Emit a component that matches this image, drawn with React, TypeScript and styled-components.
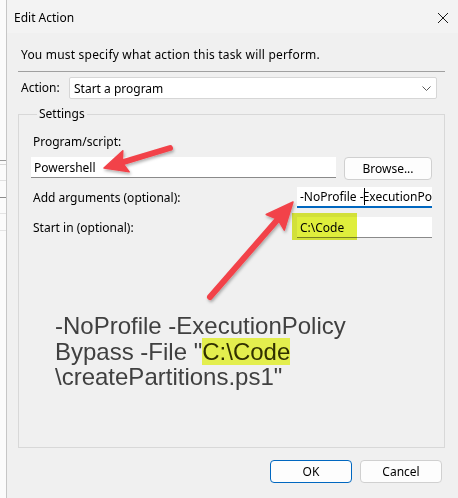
import React from 'react';
import styled, { createGlobalStyle } from 'styled-components';

const GlobalStyle = createGlobalStyle`
  html, body {
    margin: 0;
    padding: 0;
    background: #ffffff;
  }
  * {
    box-sizing: border-box;
  }
`;

const uiFont = `'Noto Sans', 'Open Sans', sans-serif`;

const Page = styled.div`
  position: relative;
  display: flex;
  width: 458px;
  height: 498px;
  overflow: hidden;
  font-family: ${uiFont};
  font-size: 12px;
  color: #000;
`;

// the window lying behind the dialog, only a sliver of it shows
const BackWindow = styled.div`
  width: 6px;
  flex-shrink: 0;
  background:
    linear-gradient(#9a9a9a, #9a9a9a) 0 160px / 100% 1px no-repeat,
    linear-gradient(#d8d8d8, #d8d8d8) 0 164px / 100% 1px no-repeat,
    linear-gradient(#e0e0e0, #e0e0e0) 0 180px / 100% 1px no-repeat,
    linear-gradient(#8c8c8c, #8c8c8c) 0 197px / 100% 1px no-repeat,
    linear-gradient(#e4e4e4, #e4e4e4) 0 213px / 100% 1px no-repeat,
    linear-gradient(#e4e4e4, #e4e4e4) 0 230px / 100% 1px no-repeat,
    #fbfbfb;
`;

const Dialog = styled.div`
  flex: 1;
  display: flex;
  flex-direction: column;
  background: #f0f0f0;
  border-left: 1px solid #c6c6c6;
`;

const TitleBar = styled.div`
  height: 33px;
  flex-shrink: 0;
  display: flex;
  align-items: center;
  justify-content: space-between;
  padding: 2px 9px 0 7px;
  background: #f3f3f3;
`;

const Title = styled.span`
  line-height: 16px;
`;

const Body = styled.div`
  display: flex;
  flex-direction: column;
  padding: 0 13px 0 11px;
`;

const Intro = styled.div`
  margin-top: 14px;
  padding-left: 3px;
  line-height: 16px;
  letter-spacing: 0.2px;
`;

const Separator = styled.div`
  margin-top: 8px;
  height: 1px;
  background: #a0a0a0;
`;

const Row = styled.div<{ $top: number; $align?: string }>`
  display: flex;
  align-items: ${p => p.$align ?? 'center'};
  margin-top: ${p => p.$top}px;
`;

const Label = styled.span<{ $width?: number; $pad?: number }>`
  width: ${p => (p.$width ? `${p.$width}px` : 'auto')};
  flex: ${p => (p.$width ? 'none' : '1')};
  padding-left: ${p => p.$pad ?? 2}px;
  line-height: 16px;
  white-space: nowrap;
`;

const Combo = styled.div`
  flex: 1;
  height: 22px;
  margin-right: 8px;
  display: flex;
  align-items: center;
  justify-content: space-between;
  padding: 0 5px 0 4px;
  background: #ffffff;
  border: 1px solid #d6d6d6;
  border-radius: 2px;
`;

const GroupBox = styled.fieldset`
  margin: 7px 0 0;
  height: 342px;
  padding: 0 12px;
  border: 1px solid #d8d8d8;
  min-width: 0;
`;

const Legend = styled.legend`
  margin-left: 6px;
  padding: 0 2px;
  line-height: 16px;
`;

const TextBox = styled.div<{ $active?: boolean; $width?: number; $gap?: number }>`
  position: relative;
  height: 21px;
  width: ${p => (p.$width ? `${p.$width}px` : 'auto')};
  flex: ${p => (p.$width ? 'none' : '1')};
  margin-right: ${p => p.$gap ?? 0}px;
  display: flex;
  align-items: center;
  padding-left: 3px;
  background: #ffffff;
  border-bottom: ${p => (p.$active ? '2px solid #0067c0' : '1px solid #8a8a8a')};
  white-space: nowrap;
  overflow: hidden;
`;

const Caret = styled.span`
  display: inline-block;
  width: 1px;
  height: 17px;
  margin-right: -1px;
  background: #000;
`;

// highlighter mark drawn over the start-in box
const Highlight = styled.span`
  position: absolute;
  left: -5px;
  top: -4px;
  width: 65px;
  height: 27px;
  background: #dfee3c;
  mix-blend-mode: multiply;
`;

const HighlightWrap = styled.div`
  position: relative;
  display: flex;
`;

const Button = styled.button<{ $primary?: boolean; $width?: number }>`
  width: ${p => p.$width ?? 82}px;
  height: 23px;
  padding: 0;
  font-family: ${uiFont};
  font-size: 12px;
  color: #000;
  background: #fdfdfd;
  border: 1px solid ${p => (p.$primary ? '#0067c0' : '#d0d0d0')};
  border-radius: 4px;
`;

const Note = styled.div`
  margin: 75px 0 0 24px;
  font-family: 'Liberation Sans', Arial, sans-serif;
  font-size: 24px;
  line-height: 25.5px;
  color: #404040;
`;

const Mark = styled.span`
  background: #e3ee4e;
  color: #303000;
`;

const ButtonRow = styled.div`
  display: flex;
  justify-content: flex-end;
  gap: 8px;
  margin: 12px 3px 0 0;
`;

const Overlay = styled.svg`
  position: absolute;
  left: 0;
  top: 0;
  pointer-events: none;
`;

function Close() {
  return (
    <svg width="12" height="12" viewBox="0 0 12 12">
      <path d="M1 1 L11 11 M11 1 L1 11" stroke="#1a1a1a" strokeWidth="1" />
    </svg>
  );
}

function Chevron() {
  return (
    <svg width="9" height="5" viewBox="0 0 9 5">
      <path d="M0.5 0.5 L4.5 4.5 L8.5 0.5" stroke="#5a5a5a" fill="none" strokeWidth="1" />
    </svg>
  );
}

function Arrow({ x1, y1, x2, y2, len, half }: { x1: number; y1: number; x2: number; y2: number; len: number; half: number }) {
  const d = Math.hypot(x2 - x1, y2 - y1);
  const ux = (x2 - x1) / d;
  const uy = (y2 - y1) / d;
  const bx = x2 - ux * len;
  const by = y2 - uy * len;
  const nx = uy;
  const ny = -ux;
  const head = `${x2},${y2} ${bx + nx * half},${by + ny * half} ${bx + ux * 4},${by + uy * 4} ${bx - nx * half},${by - ny * half}`;
  return (
    <g filter="url(#shade)">
      <line x1={x1} y1={y1} x2={bx + ux * 3} y2={by + uy * 3} stroke="#f2434a" strokeWidth="6" strokeLinecap="round" />
      <polygon points={head} fill="#f2434a" stroke="#f2434a" strokeWidth="1.5" strokeLinejoin="round" />
    </g>
  );
}

export default function App() {
  return (
    <>
      <GlobalStyle />
      <Page>
        <BackWindow />
        <Dialog>
          <TitleBar>
            <Title>Edit Action</Title>
            <Close />
          </TitleBar>
          <Body>
            <Intro>You must specify what action this task will perform.</Intro>
            <Separator />
            <Row $top={5}>
              <Label $width={51} $pad={3}>Action:</Label>
              <Combo>
                <span>Start a program</span>
                <Chevron />
              </Combo>
            </Row>
            <GroupBox>
              <Legend>Settings</Legend>
              <Row $top={12}>
                <Label>Program/script:</Label>
              </Row>
              <Row $top={7} $align="flex-start">
                <TextBox $gap={8}>Powershell</TextBox>
                <Button $width={88}>Browse...</Button>
              </Row>
              <Row $top={7}>
                <Label>Add arguments (optional):</Label>
                <TextBox $active $width={135}>
                  -NoProfile -<Caret />ExecutionPo
                </TextBox>
              </Row>
              <Row $top={9}>
                <Label>Start in (optional):</Label>
                <HighlightWrap>
                  <TextBox $width={135}>C:\Code</TextBox>
                  <Highlight />
                </HighlightWrap>
              </Row>
              <Note>
                -NoProfile -ExecutionPolicy
                <br />
                Bypass -File "<Mark>C:\Code</Mark>
                <br />
                \createPartitions.ps1"
              </Note>
            </GroupBox>
            <ButtonRow>
              <Button $primary>OK</Button>
              <Button>Cancel</Button>
            </ButtonRow>
          </Body>
        </Dialog>
        <Overlay width="458" height="498" viewBox="0 0 458 498">
          <defs>
            <filter id="shade" x="-20%" y="-20%" width="140%" height="140%">
              <feDropShadow dx="1" dy="2" stdDeviation="1.5" floodColor="#000" floodOpacity="0.3" />
            </filter>
          </defs>
          <Arrow x1={170} y1={148} x2={104} y2={168} len={23} half={11} />
          <Arrow x1={210} y1={297} x2={293} y2={202} len={27} half={12} />
        </Overlay>
      </Page>
    </>
  );
}
